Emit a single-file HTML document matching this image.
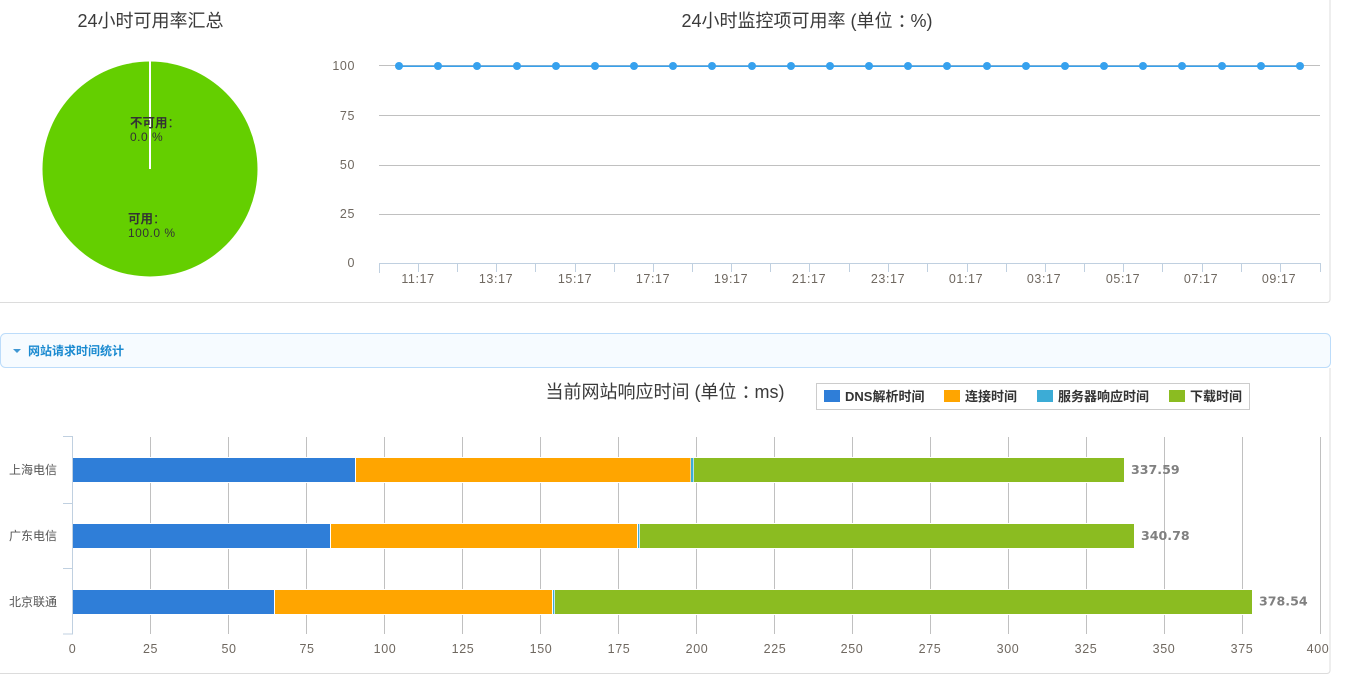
<!DOCTYPE html>
<html lang="zh-CN">
<head>
<meta charset="utf-8">
<title>24小时可用率</title>
<style>
html,body{margin:0;padding:0;background:#fff;width:1346px;height:675px;overflow:hidden}
svg{display:block;position:absolute;left:0;top:0}
text{font-family:"Liberation Sans","Noto Sans CJK SC",sans-serif}
.t{font-size:18px;fill:#3a3a3a;text-anchor:middle}
.a{font-size:12.5px;fill:#6f6860;letter-spacing:.6px;text-anchor:middle}
.y{font-size:12.5px;fill:#6f6860;letter-spacing:.6px;text-anchor:end}
.c{font-size:12px;fill:#555}
.l{font-size:13px;font-weight:bold;fill:#333}
.v{font-family:"DejaVu Sans",sans-serif;font-size:12.6px;font-weight:bold;fill:#808080}
.p{font-size:12px;fill:#333}
.pb{font-size:12.5px;font-weight:bold;fill:#333}
</style>
</head>
<body>
<svg width="1346" height="675" viewBox="0 0 1346 675" xmlns="http://www.w3.org/2000/svg">
<!-- top panel border -->
<path d="M0 302.5H1327a3 3 0 0 0 3-3V0" fill="none" stroke="#dcdcdc" stroke-width="1"/>

<text class="t" x="150.5" y="27">24小时可用率汇总</text>
<text class="t" x="807" y="27">24小时监控项可用率 (单位<tspan dx="5">：</tspan><tspan dx="-5">%)</tspan></text>

<!-- pie -->
<circle cx="150" cy="169" r="107.5" fill="#64cf00"/>
<rect x="149" y="61" width="2" height="108" fill="#fff"/>
<text class="pb" x="130" y="127">不可用<tspan font-weight="normal">：</tspan></text>
<text class="p" x="130" y="141" letter-spacing=".5">0.0 %</text>
<text class="pb" x="128" y="223">可用<tspan font-weight="normal">：</tspan></text>
<text class="p" x="128" y="237" letter-spacing=".5">100.0 %</text>

<!-- line chart grid -->
<path d="M379 65.5H1320M379 115.5H1320M379 165.5H1320M379 214.5H1320" stroke="#c0c0c0" stroke-width="1" fill="none"/>
<path d="M379 263.5H1321M379.5 263V273M418.5 263V272M457.5 263V272M496.5 263V272M535.5 263V272M575.5 263V272M614.5 263V272M653.5 263V272M692.5 263V272M731.5 263V272M770.5 263V272M809.5 263V272M849.5 263V272M888.5 263V272M927.5 263V272M967.5 263V272M1006.5 263V272M1045.5 263V272M1084.5 263V272M1123.5 263V272M1162.5 263V272M1202.5 263V272M1241.5 263V272M1280.5 263V272M1320.5 263V272" stroke="#c0d0e0" stroke-width="1" fill="none"/>
<path d="M399 66.2H1300" stroke="#36a1ee" stroke-width="1.5" fill="none"/>
<g fill="#36a1ee">
<circle cx="399" cy="66" r="4"/><circle cx="438" cy="66" r="4"/><circle cx="477" cy="66" r="4"/><circle cx="517" cy="66" r="4"/><circle cx="556" cy="66" r="4"/><circle cx="595" cy="66" r="4"/><circle cx="634" cy="66" r="4"/><circle cx="673" cy="66" r="4"/><circle cx="712" cy="66" r="4"/><circle cx="752" cy="66" r="4"/><circle cx="791" cy="66" r="4"/><circle cx="830" cy="66" r="4"/><circle cx="869" cy="66" r="4"/><circle cx="908" cy="66" r="4"/><circle cx="947" cy="66" r="4"/><circle cx="987" cy="66" r="4"/><circle cx="1026" cy="66" r="4"/><circle cx="1065" cy="66" r="4"/><circle cx="1104" cy="66" r="4"/><circle cx="1143" cy="66" r="4"/><circle cx="1182" cy="66" r="4"/><circle cx="1222" cy="66" r="4"/><circle cx="1261" cy="66" r="4"/><circle cx="1300" cy="66" r="4"/>
</g>
<text class="y" x="355" y="70">100</text>
<text class="y" x="355" y="120">75</text>
<text class="y" x="355" y="169">50</text>
<text class="y" x="355" y="218">25</text>
<text class="y" x="355" y="267">0</text>
<text class="a" x="418" y="283">11:17</text>
<text class="a" x="496" y="283">13:17</text>
<text class="a" x="575" y="283">15:17</text>
<text class="a" x="653" y="283">17:17</text>
<text class="a" x="731" y="283">19:17</text>
<text class="a" x="809" y="283">21:17</text>
<text class="a" x="888" y="283">23:17</text>
<text class="a" x="966" y="283">01:17</text>
<text class="a" x="1044" y="283">03:17</text>
<text class="a" x="1123" y="283">05:17</text>
<text class="a" x="1201" y="283">07:17</text>
<text class="a" x="1279" y="283">09:17</text>

<!-- section header -->
<rect x="0.5" y="333.5" width="1330" height="34" rx="5" fill="#f6fbff" stroke="#bcdcfa" stroke-width="1"/>
<path d="M13 349H21L17 353Z" fill="#3f97d3"/>
<text x="28" y="355" font-size="12" font-weight="bold" fill="#1a8ad0">网站请求时间统计</text>

<!-- bottom panel border -->
<path d="M0 673.5H1327a3 3 0 0 0 3-3V368" fill="none" stroke="#dcdcdc" stroke-width="1"/>

<text class="t" x="665" y="398">当前网站响应时间 (单位<tspan dx="5">：</tspan><tspan dx="-5">ms)</tspan></text>

<!-- legend -->
<rect x="816.5" y="383.5" width="433" height="26" fill="#fff" stroke="#cccccc" stroke-width="1"/>
<rect x="824" y="390" width="16" height="12" fill="#2f7ed8"/>
<text class="l" x="845" y="401">DNS解析时间</text>
<rect x="944" y="390" width="16" height="12" fill="#ffa500"/>
<text class="l" x="965" y="401">连接时间</text>
<rect x="1037" y="390" width="16" height="12" fill="#3cacd6"/>
<text class="l" x="1058" y="401">服务器响应时间</text>
<rect x="1169" y="390" width="16" height="12" fill="#8bbc21"/>
<text class="l" x="1190" y="401">下载时间</text>

<!-- bar grid -->
<path d="M150.5 437V634M228.5 437V634M306.5 437V634M384.5 437V634M462.5 437V634M540.5 437V634M618.5 437V634M696.5 437V634M774.5 437V634M852.5 437V634M930.5 437V634M1008.5 437V634M1086.5 437V634M1164.5 437V634M1242.5 437V634M1320.5 437V634" stroke="#c0c0c0" stroke-width="1" fill="none"/>
<path d="M72.5 436V634M63 436.5H73M63 503.5H73M63 568.5H73M63 634H73" stroke="#c0d0e0" stroke-width="1" fill="none"/>

<!-- row 1 -->
<rect x="73" y="457" width="1052" height="26" fill="#fff"/>
<rect x="73" y="458" width="282" height="24" fill="#2f7ed8"/>
<rect x="356" y="458" width="334.5" height="24" fill="#ffa500"/>
<rect x="691" y="458" width="2.4" height="24" fill="#3cacd6"/>
<rect x="694" y="458" width="430" height="24" fill="#8bbc21"/>
<!-- row 2 -->
<rect x="73" y="523" width="1062" height="26" fill="#fff"/>
<rect x="73" y="524" width="257" height="24" fill="#2f7ed8"/>
<rect x="331" y="524" width="306" height="24" fill="#ffa500"/>
<rect x="638" y="524" width="1.3" height="24" fill="#3cacd6"/>
<rect x="640" y="524" width="494" height="24" fill="#8bbc21"/>
<!-- row 3 -->
<rect x="73" y="589" width="1180" height="26" fill="#fff"/>
<rect x="73" y="590" width="201" height="24" fill="#2f7ed8"/>
<rect x="275" y="590" width="277" height="24" fill="#ffa500"/>
<rect x="553" y="590" width="1.3" height="24" fill="#3cacd6"/>
<rect x="555" y="590" width="697" height="24" fill="#8bbc21"/>

<text class="v" x="1131" y="474">337.59</text>
<text class="v" x="1141" y="540">340.78</text>
<text class="v" x="1259" y="605.5">378.54</text>

<text class="c" x="9" y="474">上海电信</text>
<text class="c" x="9" y="540">广东电信</text>
<text class="c" x="9" y="606">北京联通</text>

<text class="a" x="72.5" y="653">0</text>
<text class="a" x="150.5" y="653">25</text>
<text class="a" x="229" y="653">50</text>
<text class="a" x="307" y="653">75</text>
<text class="a" x="385" y="653">100</text>
<text class="a" x="463" y="653">125</text>
<text class="a" x="541" y="653">150</text>
<text class="a" x="619" y="653">175</text>
<text class="a" x="697" y="653">200</text>
<text class="a" x="775" y="653">225</text>
<text class="a" x="852" y="653">250</text>
<text class="a" x="930" y="653">275</text>
<text class="a" x="1008" y="653">300</text>
<text class="a" x="1086" y="653">325</text>
<text class="a" x="1164" y="653">350</text>
<text class="a" x="1242" y="653">375</text>
<text class="a" x="1318" y="653">400</text>
</svg>
</body>
</html>
